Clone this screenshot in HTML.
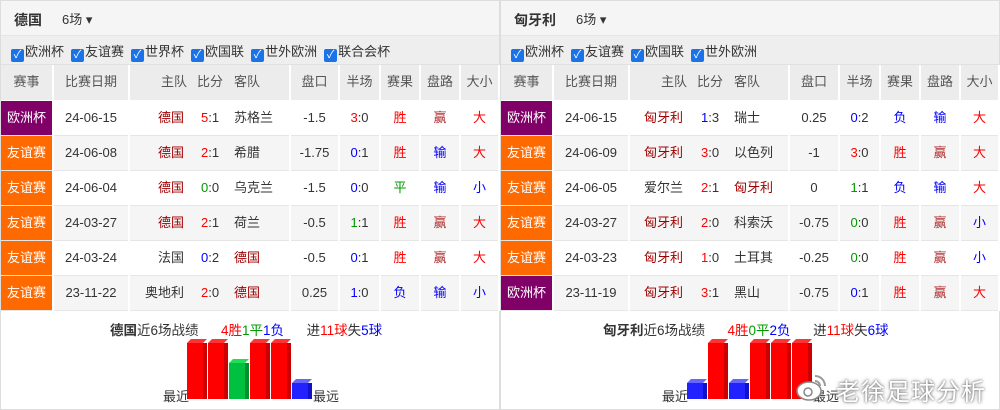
<!DOCTYPE html>
<html><head><meta charset="utf-8"><style>
*{margin:0;padding:0;box-sizing:border-box}
body{width:1000px;height:410px;background:#fff;font-family:"Liberation Sans","Noto Sans CJK SC",sans-serif;font-size:13px;color:#333;position:relative;overflow:hidden}
.p{position:absolute;top:0;width:500px;height:410px;border:1px solid #ddd}
.hd{height:35px;background:#f5f5f5;border-bottom:1px solid #e5e5e5;position:relative}
.hd b{position:absolute;left:13px;top:9px;font-size:14px;color:#333}
.hd span{position:absolute;top:8px;font-size:13px;color:#333}
.flt{height:29px;background:#eee;border-bottom:1px solid #e0e0e0;padding:5px 0 0 10px;white-space:nowrap}
.flt i{display:inline-block;width:13px;height:13px;background:#1a73e8;border-radius:2px;vertical-align:-2px;color:#fff;font-style:normal;font-size:11px;line-height:13px;text-align:center;margin-right:1px}
.flt label{margin-right:7px;color:#333}
table{border-collapse:collapse;table-layout:fixed;width:498px}
td{height:35px;text-align:center;border-right:2px solid #fff;border-bottom:1px solid #e6e6e6;padding:0;white-space:nowrap;line-height:34px;vertical-align:middle}
tr.h td{background:#ececec;color:#555;border-bottom:1px solid #fff}
tr.g td{background:#f5f5f5}
td.e{color:#fff}
.eu{background:#800068!important}.fr{background:#ff6a00!important}
.w{position:relative;height:34px;line-height:34px}
.w div{position:absolute;top:0}
.r{color:#f00}.gr{color:#090}.bl{color:#00f}.dr{color:#a00000}.yw{color:#b03030}
.sum{position:absolute;top:319px;font-size:13.5px;white-space:nowrap}
.bar{position:absolute;bottom:11px;width:20px}
.bar .f{position:absolute;left:0;bottom:0;width:16px}
.bar .s{position:absolute;right:0;bottom:0;width:4px}
.bar .tp{position:absolute;left:0;width:20px;height:4px}
.lbl{position:absolute;top:386px;font-size:13px}
.wm{position:absolute;right:14px;top:372px;font-size:24px;color:#fff;text-shadow:0 0 2px #666,0 0 4px #999;letter-spacing:1px}
</style></head><body>

<div class="p" style="left:0">
<div class="hd"><b>德国</b><span style="left:61px">6场 ▾</span></div>
<div class="flt"><label><i>✓</i>欧洲杯</label><label><i>✓</i>友谊赛</label><label><i>✓</i>世界杯</label><label><i>✓</i>欧国联</label><label><i>✓</i>世外欧洲</label><label><i>✓</i>联合会杯</label></div>
<table>
<colgroup><col style="width:52px"><col style="width:76px"><col style="width:161px"><col style="width:49px"><col style="width:41px"><col style="width:40px"><col style="width:40px"><col style="width:39px"></colgroup>
<tr class="h"><td>赛事</td><td>比赛日期</td><td><div class="w"><div style="left:31px">主队</div><div style="left:67px">比分</div><div style="left:104px">客队</div></div></td><td>盘口</td><td>半场</td><td>赛果</td><td>盘路</td><td>大小</td></tr>
<tr><td class="e eu">欧洲杯</td><td>24-06-15</td><td><div class="w"><div style="right:105px" class="dr">德国</div><div style="left:71px"><span class="r">5</span>:1</div><div style="left:104px">苏格兰</div></div></td><td>-1.5</td><td><span class="r">3</span>:0</td><td class="r">胜</td><td class="yw">赢</td><td class="r">大</td></tr>
<tr class="g"><td class="e fr">友谊赛</td><td>24-06-08</td><td><div class="w"><div style="right:105px" class="dr">德国</div><div style="left:71px"><span class="r">2</span>:1</div><div style="left:104px">希腊</div></div></td><td>-1.75</td><td><span class="bl">0</span>:1</td><td class="r">胜</td><td class="bl">输</td><td class="r">大</td></tr>
<tr><td class="e fr">友谊赛</td><td>24-06-04</td><td><div class="w"><div style="right:105px" class="dr">德国</div><div style="left:71px"><span class="gr">0</span>:0</div><div style="left:104px">乌克兰</div></div></td><td>-1.5</td><td><span class="bl">0</span>:0</td><td class="gr">平</td><td class="bl">输</td><td class="bl">小</td></tr>
<tr class="g"><td class="e fr">友谊赛</td><td>24-03-27</td><td><div class="w"><div style="right:105px" class="dr">德国</div><div style="left:71px"><span class="r">2</span>:1</div><div style="left:104px">荷兰</div></div></td><td>-0.5</td><td><span class="gr">1</span>:1</td><td class="r">胜</td><td class="yw">赢</td><td class="r">大</td></tr>
<tr><td class="e fr">友谊赛</td><td>24-03-24</td><td><div class="w"><div style="right:105px">法国</div><div style="left:71px"><span class="bl">0</span>:2</div><div style="left:104px" class="dr">德国</div></div></td><td>-0.5</td><td><span class="bl">0</span>:1</td><td class="r">胜</td><td class="yw">赢</td><td class="r">大</td></tr>
<tr class="g"><td class="e fr">友谊赛</td><td>23-11-22</td><td><div class="w"><div style="right:105px">奥地利</div><div style="left:71px"><span class="r">2</span>:0</div><div style="left:104px" class="dr">德国</div></div></td><td>0.25</td><td><span class="bl">1</span>:0</td><td class="bl">负</td><td class="bl">输</td><td class="bl">小</td></tr>
</table>
</div>

<div class="p" style="left:500px">
<div class="hd"><b>匈牙利</b><span style="left:75px">6场 ▾</span></div>
<div class="flt"><label><i>✓</i>欧洲杯</label><label><i>✓</i>友谊赛</label><label><i>✓</i>欧国联</label><label><i>✓</i>世外欧洲</label></div>
<table>
<colgroup><col style="width:52px"><col style="width:76px"><col style="width:160px"><col style="width:50px"><col style="width:41px"><col style="width:40px"><col style="width:40px"><col style="width:39px"></colgroup>
<tr class="h"><td>赛事</td><td>比赛日期</td><td><div class="w"><div style="left:31px">主队</div><div style="left:67px">比分</div><div style="left:104px">客队</div></div></td><td>盘口</td><td>半场</td><td>赛果</td><td>盘路</td><td>大小</td></tr>
<tr><td class="e eu">欧洲杯</td><td>24-06-15</td><td><div class="w"><div style="right:105px" class="dr">匈牙利</div><div style="left:71px"><span class="bl">1</span>:3</div><div style="left:104px">瑞士</div></div></td><td>0.25</td><td><span class="bl">0</span>:2</td><td class="bl">负</td><td class="bl">输</td><td class="r">大</td></tr>
<tr class="g"><td class="e fr">友谊赛</td><td>24-06-09</td><td><div class="w"><div style="right:105px" class="dr">匈牙利</div><div style="left:71px"><span class="r">3</span>:0</div><div style="left:104px">以色列</div></div></td><td>-1</td><td><span class="r">3</span>:0</td><td class="r">胜</td><td class="yw">赢</td><td class="r">大</td></tr>
<tr><td class="e fr">友谊赛</td><td>24-06-05</td><td><div class="w"><div style="right:105px">爱尔兰</div><div style="left:71px"><span class="r">2</span>:1</div><div style="left:104px" class="dr">匈牙利</div></div></td><td>0</td><td><span class="gr">1</span>:1</td><td class="bl">负</td><td class="bl">输</td><td class="r">大</td></tr>
<tr class="g"><td class="e fr">友谊赛</td><td>24-03-27</td><td><div class="w"><div style="right:105px" class="dr">匈牙利</div><div style="left:71px"><span class="r">2</span>:0</div><div style="left:104px">科索沃</div></div></td><td>-0.75</td><td><span class="gr">0</span>:0</td><td class="r">胜</td><td class="yw">赢</td><td class="bl">小</td></tr>
<tr><td class="e fr">友谊赛</td><td>24-03-23</td><td><div class="w"><div style="right:105px" class="dr">匈牙利</div><div style="left:71px"><span class="r">1</span>:0</div><div style="left:104px">土耳其</div></div></td><td>-0.25</td><td><span class="gr">0</span>:0</td><td class="r">胜</td><td class="yw">赢</td><td class="bl">小</td></tr>
<tr class="g"><td class="e eu">欧洲杯</td><td>23-11-19</td><td><div class="w"><div style="right:105px" class="dr">匈牙利</div><div style="left:71px"><span class="r">3</span>:1</div><div style="left:104px">黑山</div></div></td><td>-0.75</td><td><span class="bl">0</span>:1</td><td class="r">胜</td><td class="yw">赢</td><td class="r">大</td></tr>
</table>
</div>

<div class="sum" style="left:110px"><b>德国</b>近6场战绩&nbsp;&nbsp;&nbsp;&nbsp;&nbsp;&nbsp;<span class="r">4胜</span><span class="gr">1平</span><span class="bl">1负</span>&nbsp;&nbsp;&nbsp;&nbsp;&nbsp;&nbsp;进<span class="r">11球</span>失<span class="bl">5球</span></div>
<div class="sum" style="left:603px"><b>匈牙利</b>近6场战绩&nbsp;&nbsp;&nbsp;&nbsp;&nbsp;&nbsp;<span class="r">4胜</span><span class="gr">0平</span><span class="bl">2负</span>&nbsp;&nbsp;&nbsp;&nbsp;&nbsp;&nbsp;进<span class="r">11球</span>失<span class="bl">6球</span></div>

<div class="lbl" style="left:163px">最近</div><div class="lbl" style="left:313px">最远</div>
<div class="lbl" style="left:662px">最近</div><div class="lbl" style="left:813px">最远</div>

<div class="bar" style="left:187px;height:60px"><div class="f" style="height:56px;background:#f00"></div><div class="s" style="height:56px;background:#c00"></div><div class="tp" style="top:0;background:#f33;clip-path:polygon(4px 0,100% 0,16px 100%,0 100%)"></div></div>
<div class="bar" style="left:208px;height:60px"><div class="f" style="height:56px;background:#f00"></div><div class="s" style="height:56px;background:#c00"></div><div class="tp" style="top:0;background:#f33;clip-path:polygon(4px 0,100% 0,16px 100%,0 100%)"></div></div>
<div class="bar" style="left:229px;height:40px"><div class="f" style="height:36px;background:#00c040"></div><div class="s" style="height:36px;background:#009030"></div><div class="tp" style="top:0;background:#2d5;clip-path:polygon(4px 0,100% 0,16px 100%,0 100%)"></div></div>
<div class="bar" style="left:250px;height:60px"><div class="f" style="height:56px;background:#f00"></div><div class="s" style="height:56px;background:#c00"></div><div class="tp" style="top:0;background:#f33;clip-path:polygon(4px 0,100% 0,16px 100%,0 100%)"></div></div>
<div class="bar" style="left:271px;height:60px"><div class="f" style="height:56px;background:#f00"></div><div class="s" style="height:56px;background:#c00"></div><div class="tp" style="top:0;background:#f33;clip-path:polygon(4px 0,100% 0,16px 100%,0 100%)"></div></div>
<div class="bar" style="left:292px;height:20px"><div class="f" style="height:16px;background:#22f"></div><div class="s" style="height:16px;background:#11c"></div><div class="tp" style="top:0;background:#66f;clip-path:polygon(4px 0,100% 0,16px 100%,0 100%)"></div></div>

<div class="bar" style="left:687px;height:20px"><div class="f" style="height:16px;background:#22f"></div><div class="s" style="height:16px;background:#11c"></div><div class="tp" style="top:0;background:#66f;clip-path:polygon(4px 0,100% 0,16px 100%,0 100%)"></div></div>
<div class="bar" style="left:708px;height:60px"><div class="f" style="height:56px;background:#f00"></div><div class="s" style="height:56px;background:#c00"></div><div class="tp" style="top:0;background:#f33;clip-path:polygon(4px 0,100% 0,16px 100%,0 100%)"></div></div>
<div class="bar" style="left:729px;height:20px"><div class="f" style="height:16px;background:#22f"></div><div class="s" style="height:16px;background:#11c"></div><div class="tp" style="top:0;background:#66f;clip-path:polygon(4px 0,100% 0,16px 100%,0 100%)"></div></div>
<div class="bar" style="left:750px;height:60px"><div class="f" style="height:56px;background:#f00"></div><div class="s" style="height:56px;background:#c00"></div><div class="tp" style="top:0;background:#f33;clip-path:polygon(4px 0,100% 0,16px 100%,0 100%)"></div></div>
<div class="bar" style="left:771px;height:60px"><div class="f" style="height:56px;background:#f00"></div><div class="s" style="height:56px;background:#c00"></div><div class="tp" style="top:0;background:#f33;clip-path:polygon(4px 0,100% 0,16px 100%,0 100%)"></div></div>
<div class="bar" style="left:792px;height:60px"><div class="f" style="height:56px;background:#f00"></div><div class="s" style="height:56px;background:#c00"></div><div class="tp" style="top:0;background:#f33;clip-path:polygon(4px 0,100% 0,16px 100%,0 100%)"></div></div>

<svg style="position:absolute;left:795px;top:372px" width="34" height="30" viewBox="0 0 34 30"><ellipse cx="14" cy="19" rx="12" ry="9" fill="#fff" stroke="#888" stroke-width="1.5"/><circle cx="13" cy="20" r="4" fill="none" stroke="#888" stroke-width="1.5"/><path d="M20 4a10 10 0 0 1 10 10M20 9a5 5 0 0 1 5 5" fill="none" stroke="#999" stroke-width="2"/></svg>
<div class="wm">老徐足球分析</div>
</body></html>
